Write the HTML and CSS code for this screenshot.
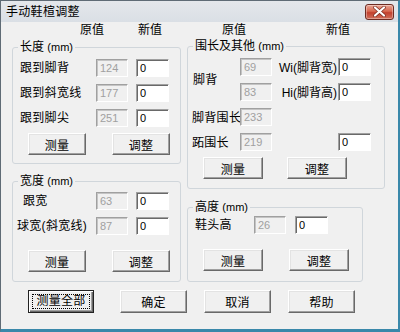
FILE: index.html
```html
<!DOCTYPE html>
<html lang="zh-CN">
<head>
    <meta charset="UTF-8">
    <title>手动鞋楦调整</title>
    <link rel="stylesheet" href="styles.css">
</head>
<body>
    <div class="dialog">
        <div class="titlebar">
            <span class="title">手动鞋楦调整</span>
            <div class="close">
                <svg width="15" height="11" viewBox="0 0 15 11">
                    <path d="M3 1.5 L12 9.5 M12 1.5 L3 9.5" stroke="#7a2a20" stroke-width="3.6" stroke-linecap="round"/>
                    <path d="M3 1.5 L12 9.5 M12 1.5 L3 9.5" stroke="#fff" stroke-width="2.2" stroke-linecap="round"/>
                </svg>
            </div>
        </div>
        <div class="content">
            <div class="columns">
                <!-- left column -->
                <div class="col col-left">
                    <div class="heads heads-left"><span>原值</span><span class="head-new">新值</span></div>

                    <div class="group group-length">
                        <span class="group-title">长度 <span class="unit">(mm)</span></span>
                        <div class="fields">
                            <label class="lbl-in">跟到脚背</label>
                            <input class="num old" value="124" disabled>
                            <input class="num" value="0">
                            <label class="lbl-in">跟到斜宽线</label>
                            <input class="num old" value="177" disabled>
                            <input class="num" value="0">
                            <label class="lbl-in">跟到脚尖</label>
                            <input class="num old" value="251" disabled>
                            <input class="num" value="0">
                        </div>
                        <div class="group-buttons">
                            <button class="btn">测量</button>
                            <button class="btn">调整</button>
                        </div>
                    </div>

                    <div class="group group-width">
                        <span class="group-title">宽度 <span class="unit">(mm)</span></span>
                        <div class="fields">
                            <label class="lbl-heel">跟宽</label>
                            <input class="num old" value="63" disabled>
                            <input class="num" value="0">
                            <label>球宽(斜宽线)</label>
                            <input class="num old" value="87" disabled>
                            <input class="num" value="0">
                        </div>
                        <div class="group-buttons">
                            <button class="btn">测量</button>
                            <button class="btn">调整</button>
                        </div>
                    </div>
                </div>

                <!-- right column -->
                <div class="col col-right">
                    <div class="heads heads-right"><span>原值</span><span class="head-new">新值</span></div>

                    <div class="group group-girth">
                        <span class="group-title">围长及其他 <span class="unit">(mm)</span></span>
                        <div class="girth-grid">
                            <label class="lbl-instep">脚背</label>
                            <input class="num old" value="69" disabled>
                            <label class="lbl-side">Wi(脚背宽)</label>
                            <input class="num" value="0">
                            <input class="num old" value="83" disabled>
                            <label class="lbl-side">Hi(脚背高)</label>
                            <input class="num" value="0">
                            <label class="lbl-wide">脚背围长</label>
                            <input class="num old shifted" value="233" disabled>
                            <span></span><span></span>
                            <label class="lbl-wide">跖围长</label>
                            <input class="num old shifted" value="219" disabled>
                            <span></span>
                            <input class="num low" value="0">
                        </div>
                        <div class="group-buttons">
                            <button class="btn">测量</button>
                            <button class="btn">调整</button>
                        </div>
                    </div>

                    <div class="group group-height">
                        <span class="group-title">高度 <span class="unit">(mm)</span></span>
                        <div class="height-row">
                            <label>鞋头高</label>
                            <input class="num old" value="26" disabled>
                            <input class="num" value="0">
                        </div>
                        <div class="group-buttons">
                            <button class="btn">测量</button>
                            <button class="btn">调整</button>
                        </div>
                    </div>
                </div>
            </div>

            <div class="actions">
                <button class="btn btn-default"><span class="focus">测量全部</span></button>
                <button class="btn">确定</button>
                <button class="btn">取消</button>
                <button class="btn">帮助</button>
            </div>
        </div>
    </div>
</body>
</html>
```

FILE: styles.css
```css
* {
    box-sizing: border-box;
}
body {
    margin: 0;
    font-family: "Liberation Sans", "Noto Sans CJK SC", sans-serif;
    font-size: 12px;
    color: #000;
    background: #fff;
}
.dialog {
    width: 400px;
    height: 332px;
    background: #f0f0f0;
    border: 1px solid #5f6b75;
    border-right: 2px solid #3a88aa;
    border-bottom: 3px solid #3a88aa;
}
/* title bar */
.titlebar {
    height: 21px;
    display: flex;
    align-items: center;
    justify-content: space-between;
    padding: 0 4px 0 5px;
    background: linear-gradient(#e4e7eb, #dadfe5);
}
.title {
    font-size: 12px;
    letter-spacing: 0.3px;
    line-height: 14px;
}
.close {
    width: 29px;
    height: 16px;
    display: flex;
    align-items: center;
    justify-content: center;
    border: 1px solid #6d2b22;
    border-radius: 3px;
    background: linear-gradient(#e9a696, #d7674f 45%, #c2402e 55%, #d0705c);
    box-shadow: inset 0 0 0 1px rgba(255, 255, 255, 0.35);
}
/* content */
.content {
    padding-left: 11px;
}
.columns {
    display: flex;
    gap: 6px;
}
.col-left {
    width: 169px;
}
.col-right {
    width: 198px;
}
.heads {
    height: 16px;
    line-height: 16px;
    display: flex;
}
.heads-left {
    padding-left: 68px;
    margin-bottom: 9px;
}
.heads-left .head-new {
    margin-left: 34px;
}
.heads-right {
    padding-left: 35px;
    margin-bottom: 8px;
}
.heads-right .head-new {
    margin-left: 80px;
}
/* group boxes */
.group {
    position: relative;
    border: 1px solid #d0d6db;
    border-radius: 3px;
}
.group-title {
    position: absolute;
    top: -8px;
    left: 5px;
    padding: 0 2px;
    line-height: 14px;
    background: #f0f0f0;
    white-space: nowrap;
}
.unit {
    font-size: 11px;
}
.group label {
    white-space: nowrap;
    align-self: center;
    line-height: 14px;
    letter-spacing: 0.3px;
}
.fields {
    display: grid;
    grid-template-columns: 79px 40px 33px;
    grid-auto-rows: 18px;
    row-gap: 7px;
    padding-left: 4px;
}
.group-length {
    padding: 11px 0 8px;
}
.group-length .group-buttons {
    margin-top: 6px;
}
.group-width {
    margin-top: 17px;
    padding: 10px 0 9px;
}
.group-width .group-buttons {
    margin-top: 15px;
}
.lbl-in {
    margin-left: 3px;
}
.lbl-heel {
    margin-left: 6px;
}
.group-buttons {
    display: flex;
    gap: 26px;
    padding-left: 15px;
}
.group-buttons .btn {
    width: 58px;
    height: 22px;
}
/* girth group */
.group-girth {
    padding: 11px 0 9px;
}
.girth-grid {
    display: grid;
    grid-template-columns: 47px 37px 61px 33px;
    grid-template-rows: repeat(4, 19px);
    row-gap: 6px;
    padding-left: 5px;
}
.lbl-instep {
    grid-row: 1 / 3;
}
.girth-grid .lbl-side {
    text-align: right;
    padding-right: 1px;
    letter-spacing: 0;
}
.lbl-wide {
    margin-left: -1px;
}
.shifted {
    margin-left: 5px;
}
.low {
    margin-top: 2px;
}
.group-girth .group-buttons {
    margin-top: 5px;
    gap: 24px;
}
.group-girth .group-buttons .btn,
.group-height .group-buttons .btn {
    width: 60px;
}
/* height group */
.group-height {
    width: 176px;
    margin-top: 18px;
    padding: 8px 0 10px;
}
.height-row {
    display: flex;
    align-items: center;
    padding-left: 7px;
}
.height-row label {
    width: 59px;
}
.height-row .num + .num {
    margin-left: 9px;
}
.group-height .group-buttons {
    margin-top: 15px;
}
/* inputs */
.num {
    width: 32px;
    height: 18px;
    margin: 0;
    padding: 0 0 0 3px;
    font: 11px "Liberation Sans", sans-serif;
    color: #000;
    background: #fff;
    border: 1px solid;
    border-color: #a0a0a0 #fff #fff #a0a0a0;
    box-shadow: inset 1px 1px #696969;
    outline: none;
}
.num:not(.old) {
    width: 33px;
}
.num.old {
    background: #f0f0f0;
    color: #a0a0a0;
    box-shadow: inset 1px 1px #c4c4c4;
}
/* buttons */
.btn {
    margin: 0;
    padding: 0;
    font-family: "Liberation Sans", "Noto Sans CJK SC", sans-serif;
    font-size: 12px;
    letter-spacing: 0.3px;
    color: #000;
    background: #f0f0f0;
    border: 1px solid;
    border-color: #fff #696969 #696969 #fff;
    box-shadow: inset -1px -1px #a0a0a0, inset 1px 1px #e3e3e3;
}
.actions {
    display: flex;
    gap: 17px;
    margin-top: 8px;
    padding-left: 16px;
}
.actions .btn {
    width: 67px;
    height: 23px;
}
.actions .btn-default {
    width: 66px;
    margin-right: 9px;
    border-color: #222;
    box-shadow: inset 1px 1px #fff, inset -1px -1px #696969, inset -2px -2px #a0a0a0;
}
.focus {
    display: block;
    margin: 3px;
    line-height: 13px;
    border: 1px dotted #000;
}
```
